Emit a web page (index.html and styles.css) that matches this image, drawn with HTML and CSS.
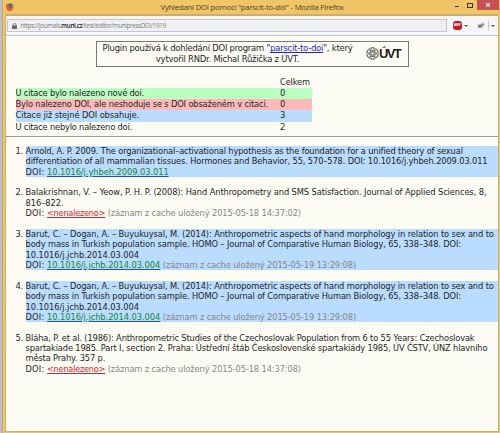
FILE: index.html
```html
<!DOCTYPE html>
<html lang="cs">
<head>
<meta charset="utf-8">
<title>Vyhledaní DOI pomocí "parscit-to-doi"</title>
<link rel="stylesheet" href="styles.css">
</head>
<body>
<div class="window">
  <header class="titlebar">
    <svg class="firefox" viewBox="0 0 16 16"><circle cx="8" cy="8" r="7.5" fill="#e46a1c"/><circle cx="9" cy="6.5" r="5.2" fill="#2a6caf"/><path d="M1 4l3-2 1 3 3 1-1 3 4 2 4-3c0 5-4 7.500-8 7.300C2 15 0 10 1 4z" fill="#e9581c"/><path d="M11 3l4 3-1 5-3 3c3-4 2-7 0-11z" fill="#f6bb32"/></svg>
    <h1><span>Vyhledaní DOI pomocí "parscit-to-doi" - Mozilla Firefox</span></h1>
    <div class="controls"><i class="min"></i><i class="max"></i><div class="close"><svg viewBox="0 0 8 8"><path d="M1.500 1.500l5 5m0-5l-5 5"/></svg></div></div>
  </header>
  <div class="view">
    <nav class="toolbar">
      <div class="address"><svg class="lock" viewBox="0 0 10 12"><path d="M2 6V4a3 3 0 0 1 6 0v2" fill="none" stroke="#666" stroke-width="1.600"/><rect y="5" width="10" height="7" rx="1" fill="#666"/></svg><span class="url">https://journals.<b>muni.cz</b>/test/editor/munipressDOI/1919</span></div>
      <div class="abp">ABP</div><i class="arrow"></i>
      <svg class="bug" viewBox="0 0 14 12"><path d="M1 7l5-3 4 1-2 4-5 1zM9 3h4l-1 3-3-1z" fill="#777"/><path d="M1 4l3 1M7 1l1 3M11 1v3M2 11l2-2M8 11V8M12 9l-3-2" stroke="#888" fill="none"/></svg>
      <i class="sep"></i><i class="arrow"></i>
    </nav>
    <main>
      <section class="credit">
        <p>Plugin používá k dohledání DOI program "<a href="#">parscit-to-doi</a>", který<br>vytvořil RNDr. Michal Růžička z ÚVT.</p>
        <div class="logo"><svg viewBox="0 0 14 14"><g fill="none" stroke="#444" stroke-width=".7"><circle cx="7" cy="7" r="6.300"/><circle cx="7" cy="7" r="1.500"/><ellipse cx="7" cy="7" rx="2.600" ry="6.200"/><ellipse cx="7" cy="7" rx="2.600" ry="6.200" transform="rotate(60 7 7)"/><ellipse cx="7" cy="7" rx="2.600" ry="6.200" transform="rotate(120 7 7)"/></g></svg><b>ÚVT</b></div>
      </section>
      <table>
        <tr><td></td><td>Celkem</td></tr>
        <tr class="new"><td class="tight">U citace bylo nalezeno nové doi.</td><td>0</td></tr>
        <tr class="differs"><td>Bylo nalezeno DOI, ale neshoduje se s DOI obsaženém v citaci.</td><td>0</td></tr>
        <tr class="same"><td class="loose">Citace již stejné DOI obsahuje.</td><td>3</td></tr>
        <tr><td class="tight">U citace nebylo nalezeno doi.</td><td>2</td></tr>
      </table>
      <hr>
      <ol>
        <li class="same">Arnold, A. P. 2009. The organizational–activational hypothesis as the foundation for a unified theory of sexual<br><span class="journal">differentiation of all mammalian tissues. Hormones and Behavior, 55, 570–578. DOI: 10.1016/j.yhbeh.2009.03.011</span><br><span class="doi">DOI:</span> <a class="found" href="#">10.1016/j.yhbeh.2009.03.011</a></li>
        <li><span class="loose">Balakrishnan, V. – Yeow, P. H. P. (2008): Hand Anthropometry and SMS Satisfaction. Journal of Applied Sciences, 8,</span><br><span class="number">816–822.</span><br><span class="doi">DOI:</span> <a class="missing" href="#">&lt;nenalezeno&gt;</a> <em>(záznam z cache uložený 2015-05-18 14:37:02)</em></li>
        <li class="same"><span class="authors">Barut, C. – Dogan, A. – Buyukuysal, M. (2014): Anthropometric aspects of hand morphology in relation to sex and to</span><br><span class="journal">body mass in Turkish population sample. HOMO – Journal of Comparative Human Biology, 65, 338–348. DOI:</span><br><span class="number">10.1016/j.jchb.2014.03.004</span><br><span class="doi">DOI:</span> <a class="found" href="#">10.1016/j.jchb.2014.03.004</a> <em>(záznam z cache uložený 2015-05-19 13:29:08)</em></li>
        <li class="same"><span class="authors">Barut, C. – Dogan, A. – Buyukuysal, M. (2014): Anthropometric aspects of hand morphology in relation to sex and to</span><br><span class="journal">body mass in Turkish population sample. HOMO – Journal of Comparative Human Biology, 65, 338–348. DOI:</span><br><span class="number">10.1016/j.jchb.2014.03.004</span><br><span class="doi">DOI:</span> <a class="found" href="#">10.1016/j.jchb.2014.03.004</a> <em>(záznam z cache uložený 2015-05-19 13:29:08)</em></li>
        <li>Bláha, P. et al. (1986): Anthropometric Studies of the Czechoslovak Population from 6 to 55 Years: Czechoslovak<br>spartakiade 1985. Part I, section 2. Praha: Ústřední štáb Československé spartakiády 1985, ÚV ČSTV, ÚNZ hlavního<br>města Prahy. 357 p.<br><span class="doi">DOI:</span> <a class="missing" href="#">&lt;nenalezeno&gt;</a> <em>(záznam z cache uložený 2015-05-18 14:37:08)</em></li>
      </ol>
    </main>
  </div>
</div>
</body>
</html>
```
FILE: styles.css
```css
* { box-sizing: border-box; }
body { margin: 0; width: 500px; height: 433px; overflow: hidden; background: #b9bfd0; }
.window { height: 433px; margin-left: 1.500px; padding: 0 2px 2.500px 3.500px; background: #efc567; border-left: 1px solid #cda650; display: flex; flex-direction: column; }
.titlebar { height: 15px; flex: none; display: flex; align-items: flex-start; }
.firefox { width: 8px; height: 8px; margin: 3px 0 0 0; }
h1 { flex: 1; min-width: 0; margin: 0; padding-left: 146.500px; font: 7.700px/15px "Open Sans", sans-serif; letter-spacing: -.19px; color: #4b3f25; white-space: nowrap; }
.controls { display: flex; align-items: flex-start; height: 10px; }
.min { width: 4px; height: 1.500px; background: #3d3218; margin: 5.500px 8.500px 0 0; }
.max { width: 6px; height: 5px; border: 1px solid #3d3218; border-top-width: 1.500px; margin: 3px 4px 0 0; }
.close { width: 22px; height: 10px; background: #c75050; display: flex; justify-content: center; align-items: center; margin-right: -1px; }
.close svg { width: 6px; height: 6px; stroke: #fff; stroke-width: 1.500; }
.view { flex: 1; min-height: 0; overflow: hidden; background: #fcfcf4; border-top: 1px solid #c5ad76; display: flex; flex-direction: column; box-shadow: 0 0 0 .5px #a99a78; }
.toolbar { flex: none; height: 20px; background: #f4f5f7; border-bottom: 1px solid #c2c2c2; display: flex; align-items: center; padding-left: 1px; }
.address { width: 440px; height: 12.500px; background: #eff0f2; border: 1px solid #c3c7cd; display: flex; align-items: center; padding-left: 3.500px; }
.lock { width: 5px; height: 6px; margin-right: 4px; }
.url { font: 6.300px/10px "Open Sans", sans-serif; letter-spacing: -.37px; color: #808080; white-space: nowrap; }
.url b { color: #222; font-weight: 600; }
.abp { width: 9px; height: 9px; margin-left: 6px; border-radius: 3px; background: #c8171e; color: #fff; font: bold 3.500px/9px "Liberation Sans", sans-serif; text-align: center; }
.arrow { border: 2px solid transparent; border-top: 2.500px solid #555; border-bottom: 0; margin-left: 1.500px; }
.bug { width: 8px; height: 7px; margin-left: 9px; }
.sep { width: 1px; height: 9px; background: #c5c5c5; margin: 0 1px 0 3px; }
main { font: 8.300px/10.375px "DejaVu Sans", sans-serif; letter-spacing: -.15px; color: #262626; padding-top: 4.500px; white-space: nowrap; }
a { color: #2222e0; }
.credit { width: 312.500px; height: 26.500px; margin-left: 90px; border: 1px solid #777; display: flex; align-items: center; padding-left: 5px; }
.credit p { margin: 0; width: 251px; flex: none; text-align: center; font-size: 8.450px; letter-spacing: -.23px; }
.logo { display: flex; align-items: center; margin-left: 13px; color: #222; }
.logo svg { width: 13px; height: 13px; }
.logo b { font: bold 13px/13px "Liberation Sans", sans-serif; letter-spacing: -1.600px; }
table { border-collapse: collapse; margin: 9.500px 0 0 9.500px; width: 296px; line-height: 11.300px; }
td { padding: 0; height: 11.300px; }
td:last-child { width: 31.500px; }
.tight { letter-spacing: -.2px; }
.loose { letter-spacing: -.1px; }
.new { background: #b9ffc2; }
.differs { background: #ffb9b9; }
.same { background: #b9dcff; }
hr { border: 0; border-top: 1px solid #999; margin: 3.500px 0 0; }
ol { margin: 8.500px 0 0; padding-left: 19.500px; }
li { margin-bottom: 10.375px; }
em { font-style: normal; letter-spacing: -.12px; color: #888; }
.doi { letter-spacing: .2px; }
.authors { letter-spacing: -.115px; }
.journal { letter-spacing: -.135px; }
.number { letter-spacing: -.05px; }
.found { letter-spacing: -.06px; color: #138a32; text-decoration-color: #2050c8; }
.missing { letter-spacing: -.3px; color: #f02020; text-decoration-color: #b03040; }
```
